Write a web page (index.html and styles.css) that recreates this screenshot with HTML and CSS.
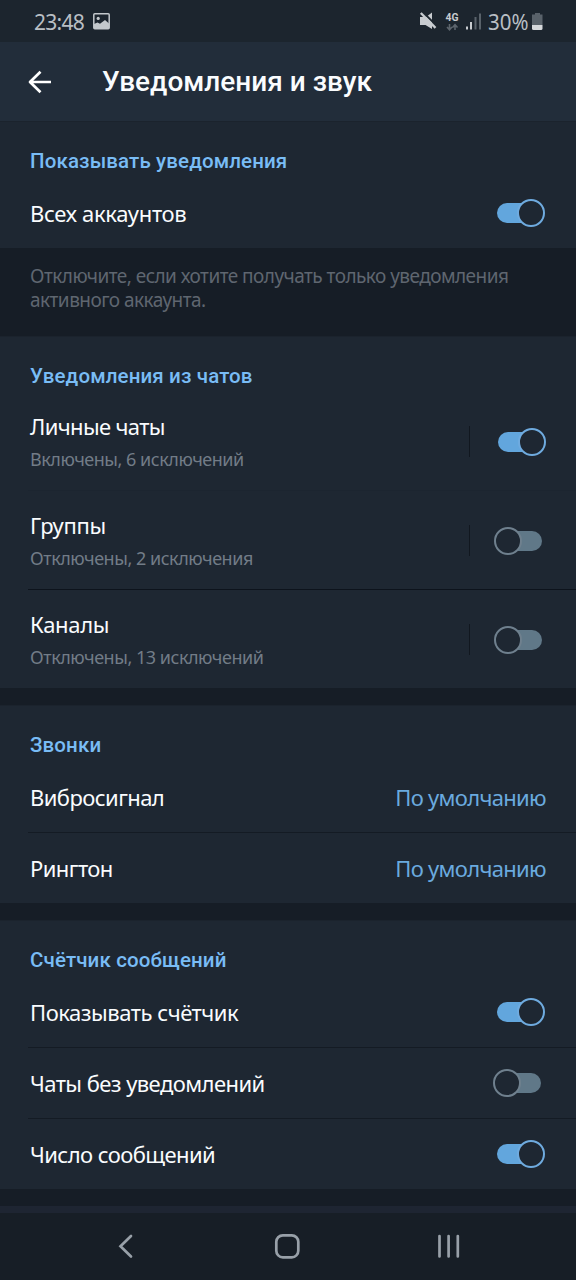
FILE: index.html
```html
<!DOCTYPE html>
<html lang="ru">
<head>
<meta charset="utf-8">
<title>Уведомления и звук</title>
<link rel="stylesheet" href="styles.css">
</head>
<body>
<div class="phone">
  <div class="status">
    <div class="status-left">
      <span class="clock">23:48</span>
      <svg class="pic" width="17" height="17" viewBox="0 0 17 17"><rect x="0.8" y="0.8" width="15.4" height="15" rx="1" fill="none" stroke="#c3c8cc" stroke-width="1.5"/><circle cx="5.2" cy="5.4" r="1.6" fill="#c3c8cc"/><path d="M1 11 4.500 9.500 7 10.800 12 7 16 10.500V16H1z" fill="#c3c8cc"/></svg>
    </div>
    <div class="status-right">
      <svg width="124" height="30" viewBox="0 0 124 30">
        <path d="M0 6H6L12 1.500V18L5.500 14H0z" fill="#c8ccd0"/>
        <path d="M2.300 0.500 16.800 15" stroke="#1c252e" stroke-width="1.800"/>
        <path d="M0.800 2 15.500 16.800" stroke="#c8ccd0" stroke-width="2.400"/>
        <text class="net" x="25.500" y="9.500" textLength="13" lengthAdjust="spacingAndGlyphs">4G</text>
        <path d="M29.500 13V18M27 16 29.500 18.700 32 16M35 19V14M32.500 16.500 35 13.800 37.500 16.500" fill="none" stroke="#5d656d" stroke-width="1.600"/>
        <path d="M47 15.500V18.500M51 11V18.500" stroke="#c8ccd0" stroke-width="2"/>
        <path d="M55.500 6V18.500M60 2.500V18.500" stroke="#59626a" stroke-width="2"/>
        <text class="percent" x="68" y="18.500" textLength="40.500" lengthAdjust="spacingAndGlyphs">30%</text>
        <path d="M115 2H120V3.500H122.500V14H112V3.500H115z" fill="#59626a"/>
        <path d="M112 14H122.500V17.500Q122.500 19 121 19H113.500Q112 19 112 17.500z" fill="#d5d8db"/>
      </svg>
    </div>
  </div>
  <header class="bar">
    <svg class="back" width="24" height="24" viewBox="0 0 24 24"><path d="M23 12H2M12.500 1.700 2 12 12.500 22.300" fill="none" stroke="#fff" stroke-width="2.700" stroke-linejoin="round"/></svg>
    <h1 class="title">Уведомления и звук</h1>
  </header>
  <section class="group">
    <h2 class="heading">Показывать уведомления</h2>
    <div class="row"><span class="label l-all">Всех аккаунтов</span><span class="switch on"></span></div>
  </section>
  <p class="hint">Отключите, если хотите получать только уведомления активного аккаунта.</p>
  <section class="group chats">
    <h2 class="heading">Уведомления из чатов</h2>
    <div class="row tall faint">
      <div class="texts"><span class="label l-private">Личные чаты</span><span class="sub">Включены, 6 исключений</span></div>
      <span class="split"></span><span class="switch on"></span>
    </div>
    <div class="row tall">
      <div class="texts"><span class="label l-groups">Группы</span><span class="sub">Отключены, 2 исключения</span></div>
      <span class="split"></span><span class="switch"></span>
    </div>
    <div class="row tall">
      <div class="texts"><span class="label l-channels">Каналы</span><span class="sub">Отключены, 13 исключений</span></div>
      <span class="split"></span><span class="switch"></span>
    </div>
  </section>
  <div class="gap"></div>
  <section class="group">
    <h2 class="heading">Звонки</h2>
    <div class="row"><span class="label">Вибросигнал</span><span class="value">По умолчанию</span></div>
    <div class="row"><span class="label">Рингтон</span><span class="value">По умолчанию</span></div>
  </section>
  <div class="gap"></div>
  <section class="group">
    <h2 class="heading">Счётчик сообщений</h2>
    <div class="row"><span class="label l-counter">Показывать счётчик</span><span class="switch on"></span></div>
    <div class="row"><span class="label">Чаты без уведомлений</span><span class="switch"></span></div>
    <div class="row"><span class="label">Число сообщений</span><span class="switch on"></span></div>
  </section>
  <div class="gap"></div>
  <div class="next"></div>
  <nav class="nav">
    <svg width="576" height="67" viewBox="0 0 576 67" fill="none" stroke="#98a0a8" stroke-width="2.700" stroke-linecap="round">
      <path d="M131 23 120.500 33.300 131 43.500"/>
      <rect x="276.300" y="22.300" width="22" height="22" rx="6.500"/>
      <path d="M439.500 23V43.500M448.600 23V43.500M457.800 23V43.500"/>
    </svg>
  </nav>
</div>
</body>
</html>
```
FILE: styles.css
```css
*, *::before, *::after { box-sizing: border-box; }
body { margin: 0; background: #161d26; }
.phone { width: 576px; height: 1280px; overflow: hidden; display: flex; flex-direction: column; font-family: "Noto Sans", sans-serif; color: #fafcfe; }
.phone > * { flex-shrink: 0; }
.status { height: 42px; background: #1c252e; display: flex; justify-content: space-between; padding: 0 32px 0 34px; }
.status-left { display: flex; align-items: center; gap: 9px; height: 42px; }
.clock { font-size: 21px; letter-spacing: -0.7px; color: #b9bfc4; padding-top: 2px; }
.status-right { padding-top: 11px; }
.status-right svg { display: block; overflow: visible; }
.net { font: bold 10.500px Roboto, sans-serif; fill: #c8ccd0; }
.percent { font: 21.500px "Noto Sans", sans-serif; fill: #b9bfc4; }
.bar { height: 79px; background: #222d3a; display: flex; align-items: center; padding-left: 28px; }
.title { margin: 0 0 0 50px; font: 500 28px/40px Roboto, sans-serif; }
.group { background: #1e2732; border-top: 1px solid #1b232d; display: flex; flex-direction: column; }
.heading { margin: 0; height: 55px; padding: 19px 30px 0; font: 500 20.500px/40px Roboto, sans-serif; letter-spacing: 0.130px; color: #79bcf5; white-space: nowrap; }
.chats .heading { height: 54px; }
.row { height: 71px; display: flex; align-items: center; justify-content: space-between; padding: 0 30px; position: relative; }
.row.tall { height: 99px; padding: 2px 29px 0 30px; }
.row + .row::before { content: ""; position: absolute; left: 28px; right: 0; top: 0; height: 1px; background: #141b24; }
.row.tall + .row::before { background: #0d131c; }
.row.faint + .row::before { background: #1c2530; }
.label { font-size: 22px; line-height: 30px; letter-spacing: -0.560px; white-space: nowrap; }
.l-all, .l-groups, .l-channels { letter-spacing: -0.320px; }
.l-private { letter-spacing: -0.650px; }
.l-counter { letter-spacing: -0.470px; }
.texts { display: flex; flex-direction: column; gap: 5px; flex: 1; }
.sub { font-size: 18px; line-height: 26px; letter-spacing: -0.470px; color: #727c87; white-space: nowrap; }
.value { font-size: 22px; line-height: 30px; letter-spacing: -0.680px; color: #6aaadf; white-space: nowrap; }
.hint { margin: 0; height: 88px; padding: 17px 30px 0; font-size: 19px; line-height: 23.500px; letter-spacing: -0.540px; color: #5f6670; }
.split { width: 1px; height: 31px; background: #11171f; margin-right: 24px; }
.switch { width: 53px; height: 28px; position: relative; flex: none; }
.switch::before { content: ""; position: absolute; left: 9px; right: 5px; top: 4px; height: 20px; border-radius: 10px; background: #607888; }
.switch::after { content: ""; position: absolute; left: 0; top: 0; width: 28px; height: 28px; border: 2px solid #6f808e; border-radius: 50%; background: #1e2732; }
.switch.on::before { background: #62a6dd; left: 4px; right: 9px; }
.switch.on::after { border-color: #6fabdf; left: 24px; }
.gap { height: 17px; }
.next { height: 7px; background: #1e2532; }
.nav { height: 67px; background: #171e26; }
.nav svg { display: block; }
```
